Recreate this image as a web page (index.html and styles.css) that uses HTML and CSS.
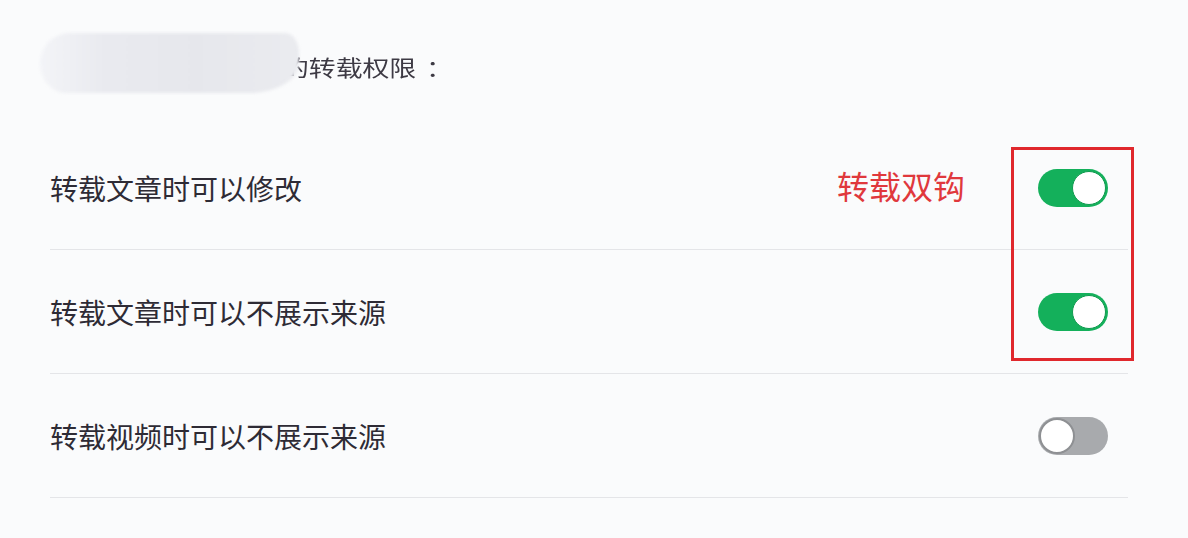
FILE: index.html
```html
<!DOCTYPE html>
<html lang="zh-CN">
<head>
<meta charset="utf-8">
<title>转载权限</title>
<link rel="stylesheet" href="styles.css">
</head>
<body>
<div class="panel">
  <div class="header">
    <span class="header-text">的转载权限<span class="colon">：</span></span>
    <span class="redact"></span>
  </div>
  <div class="row">
    <span class="label">转载文章时可以修改</span>
    <span class="note">转载双钩</span>
    <span class="toggle on"><span class="knob"></span></span>
  </div>
  <div class="row">
    <span class="label">转载文章时可以不展示来源</span>
    <span class="toggle on"><span class="knob"></span></span>
  </div>
  <div class="row">
    <span class="label">转载视频时可以不展示来源</span>
    <span class="toggle off"><span class="knob"></span></span>
  </div>
  <div class="mark-box"></div>
</div>
</body>
</html>
```
FILE: styles.css
```css
html, body {
  margin: 0;
  padding: 0;
}
body {
  background: #fafbfc;
  font-family: "Noto Sans CJK SC", "Noto Sans", sans-serif;
  color: #333333;
  width: 1188px;
  height: 538px;
  overflow: hidden;
}
.panel {
  position: relative;
  margin-left: 50px;
  width: 1078px;
}
.header {
  position: relative;
  height: 126px;
  box-sizing: border-box;
  padding-top: 51px;
  padding-left: 232px;
}
.header-text {
  display: inline-block;
  font-size: 22px;
  line-height: 30px;
  color: #3d3a44;
  transform: scaleX(1.22);
  transform-origin: left center;
}
.colon {
  margin-left: 8px;
}
.redact {
  position: absolute;
  left: -10px;
  top: 33px;
  width: 259px;
  height: 60px;
  border-radius: 30px 14px 50px 26px / 30px 20px 30px 30px;
  background: linear-gradient(90deg, #f3f4f7 0%, #e9eaef 25%, #e6e7ec 60%, #eaebef 100%);
  filter: blur(1.5px);
}
.row {
  height: 123px;
  border-bottom: 1px solid #e4e5e8;
  display: flex;
  align-items: center;
}
.label {
  font-size: 28px;
  line-height: 36px;
  color: #2e2b35;
}
.note {
  margin-left: auto;
  margin-right: 73px;
  margin-bottom: 6px;
  font-size: 32px;
  line-height: 40px;
  color: #e0383c;
}
.toggle {
  margin-left: auto;
  margin-right: 20px;
  width: 70px;
  height: 38px;
  border-radius: 19px;
  box-sizing: border-box;
  display: flex;
  align-items: center;
  padding: 2px;
}
.note + .toggle {
  margin-left: 0;
}
.toggle.on {
  background: #14b05b;
  justify-content: flex-end;
}
.toggle.off {
  background: #a8aaad;
  justify-content: flex-start;
  padding: 1px;
}
.knob {
  width: 34px;
  height: 34px;
  border-radius: 50%;
  background: #ffffff;
  box-sizing: border-box;
}
.toggle.on .knob {
  border: 1.5px solid #0f9a4e;
}
.toggle.off .knob {
  width: 36px;
  height: 36px;
  border: 2px solid #8e9093;
}
.mark-box {
  position: absolute;
  left: 961px;
  top: 147px;
  width: 123px;
  height: 214px;
  box-sizing: border-box;
  border: 3px solid #e0282d;
}
```
